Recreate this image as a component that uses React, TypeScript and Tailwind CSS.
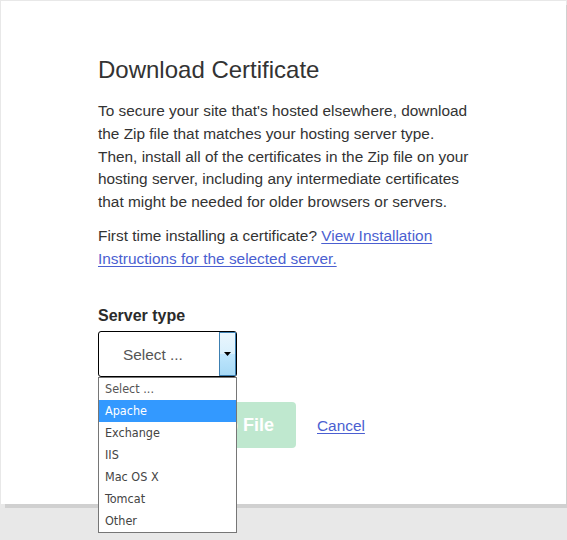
import { useState } from 'react'

const serverTypes = ['Apache', 'Exchange', 'IIS', 'Mac OS X', 'Tomcat', 'Other']

export default function App() {
  const [hovered] = useState('Apache')

  return (
    <div className="min-h-[540px] w-full bg-[#e8e8e8] pt-px pl-px" style={{ fontFamily: '"Liberation Sans", Arial, sans-serif' }}>
      {/* Card */}
      <div className="w-[565px] bg-white pt-[55px] pb-[56px] pl-[97px] shadow-[4px_4px_0_#d0d0d0] text-[#333]">
        <h1 className="text-[24px] leading-[28px] font-normal text-[#333]">Download Certificate</h1>

        <div className="w-[374px] text-[15.4px] leading-[22.75px]">
          <p className="mt-[16px]">
            To secure your site that's hosted elsewhere, download the Zip file that matches your hosting server type.
            Then, install all of the certificates in the Zip file on your hosting server, including any intermediate
            certificates that might be needed for older browsers or servers.
          </p>
          <p className="mt-[11px]">
            First time installing a certificate?{' '}
            <a href="#" className="text-[#4b5fd1] underline underline-offset-2">
              View Installation Instructions for the selected server.
            </a>
          </p>
        </div>

        {/* Server type */}
        <label className="mt-[36px] block text-[16px] leading-[20px] font-bold text-[#2b2b2b]">Server type</label>
        <div className="relative mt-[5px] w-[139px]">
          <div className="flex h-[46px] w-[139px] items-stretch rounded-[3px] border border-black bg-white">
            <span className="flex flex-1 items-center pl-[24px] text-[15.4px] text-[#555]">Select ...</span>
            <span className="flex w-[17px] items-center justify-center border border-[#3c7fb1] bg-[linear-gradient(180deg,#eaf6fd_0%,#d9f0fc_50%,#bee6fd_51%,#a7d9f5_100%)]">
              <svg width="7" height="4" viewBox="0 0 7 4">
                <path d="M0 0h7L3.5 4z" fill="#000" />
              </svg>
            </span>
          </div>

          {/* Open dropdown list */}
          <ul
            className="absolute left-0 top-full z-10 w-[139px] border border-[#767676] bg-white text-[12.5px] text-[#444]"
            style={{ fontFamily: '"DejaVu Sans Condensed", "DejaVu Sans", Tahoma, sans-serif' }}
          >
            <li className="flex h-[22px] items-center pl-[6px] text-[#555]">Select ...</li>
            {serverTypes.map((t) => (
              <li
                key={t}
                className={
                  t === hovered
                    ? 'flex h-[22px] items-center bg-[#3399ff] pl-[6px] text-white'
                    : 'flex h-[22px] items-center pl-[6px]'
                }
              >
                {t}
              </li>
            ))}
          </ul>
        </div>

        {/* Actions */}
        <div className="mt-[25px] flex items-center">
          <button
            disabled
            className="h-[46px] rounded-[4px] bg-[#bfe8cf] px-[22px] text-[18px] font-bold text-white"
          >
            Download Zip File
          </button>
          <a href="#" className="ml-[21px] text-[15.4px] text-[#4b5fd1] underline underline-offset-2">
            Cancel
          </a>
        </div>
      </div>
    </div>
  )
}
